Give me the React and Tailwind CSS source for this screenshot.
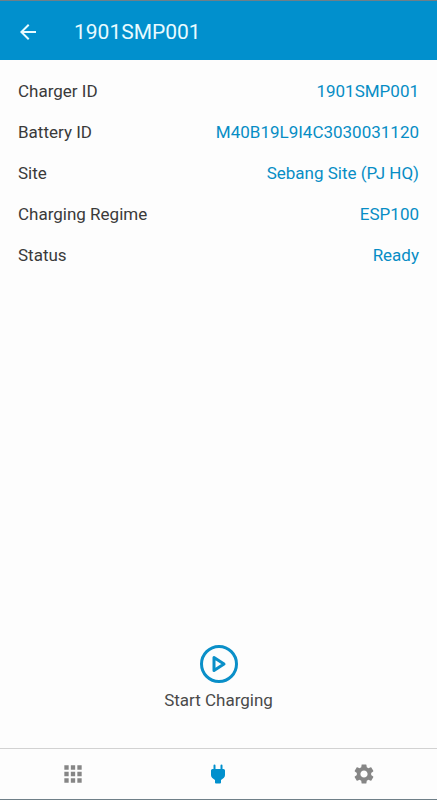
import { MdApps, MdArrowBack, MdSettings } from "react-icons/md";

const DETAILS = [
  { label: "Charger ID", value: "1901SMP001" },
  { label: "Battery ID", value: "M40B19L9I4C3030031120" },
  { label: "Site", value: "Sebang Site (PJ HQ)" },
  { label: "Charging Regime", value: "ESP100" },
  { label: "Status", value: "Ready" },
];

function App() {
  return (
    <div className="flex flex-col min-h-screen bg-[#fdfdfd] font-[Roboto,sans-serif] border-y border-[#6f7f88]">
      <Header title="1901SMP001" />
      <main className="flex flex-col grow justify-between px-[18px] pt-[10px] pb-9">
        <Details />
        <StartButton />
      </main>
      <TabBar />
    </div>
  );
}

function Header({ title }) {
  return (
    <header className="flex items-center gap-[34px] px-4 pt-0.5 h-[59px] bg-[#0190cd] text-[#e8fbff]">
      <button aria-label="Back">
        <MdArrowBack className="size-6" />
      </button>
      <h1 className="text-[21px] leading-7">{title}</h1>
    </header>
  );
}

function Details() {
  return (
    <dl className="text-[17px] leading-6">
      {DETAILS.map(({ label, value }) => (
        <div key={label} className="flex justify-between items-center h-[41px]">
          <dt className="text-[#3a3a3a]">{label}</dt>
          <dd className="text-[#078dc5]">{value}</dd>
        </div>
      ))}
    </dl>
  );
}

function StartButton() {
  return (
    <button className="flex flex-col items-center gap-1 self-center text-[17px] leading-6 text-[#4a4a4a]">
      <svg
        viewBox="0 0 40 40"
        className="size-10 text-[#0a8fc8]"
        fill="none"
        stroke="currentColor"
        strokeWidth="3"
      >
        <circle cx="20" cy="20" r="17.5" />
        <path d="M15 13.5v13l10-6.5z" strokeLinejoin="round" />
      </svg>
      <span>Start Charging</span>
    </button>
  );
}

function TabBar() {
  return (
    <nav className="grid grid-cols-3 h-[51px] border-t border-[#d2d2d2] text-[#868686]">
      <button aria-label="Apps" className="flex items-center justify-center">
        <MdApps className="size-[26px]" />
      </button>
      <button
        aria-label="Charger"
        aria-current="page"
        className="flex items-center justify-center text-[#0190cd]"
      >
        <PlugIcon />
      </button>
      <button aria-label="Settings" className="flex items-center justify-center">
        <MdSettings className="size-6" />
      </button>
    </nav>
  );
}

function PlugIcon() {
  return (
    <svg viewBox="0 0 24 24" className="size-6" fill="currentColor">
      <path d="M7.500 3.500a1 1 0 0 1 2 0V7h5V3.500a1 1 0 0 1 2 0V7h1A1.500 1.500 0 0 1 19 8.500V13c0 2-1.500 3.500-4 5v2.500a1 1 0 0 1-1 1h-4a1 1 0 0 1-1-1V18c-2.500-1.500-4-3-4-5V8.500A1.500 1.500 0 0 1 6.500 7h1z" />
    </svg>
  );
}

export default App;
